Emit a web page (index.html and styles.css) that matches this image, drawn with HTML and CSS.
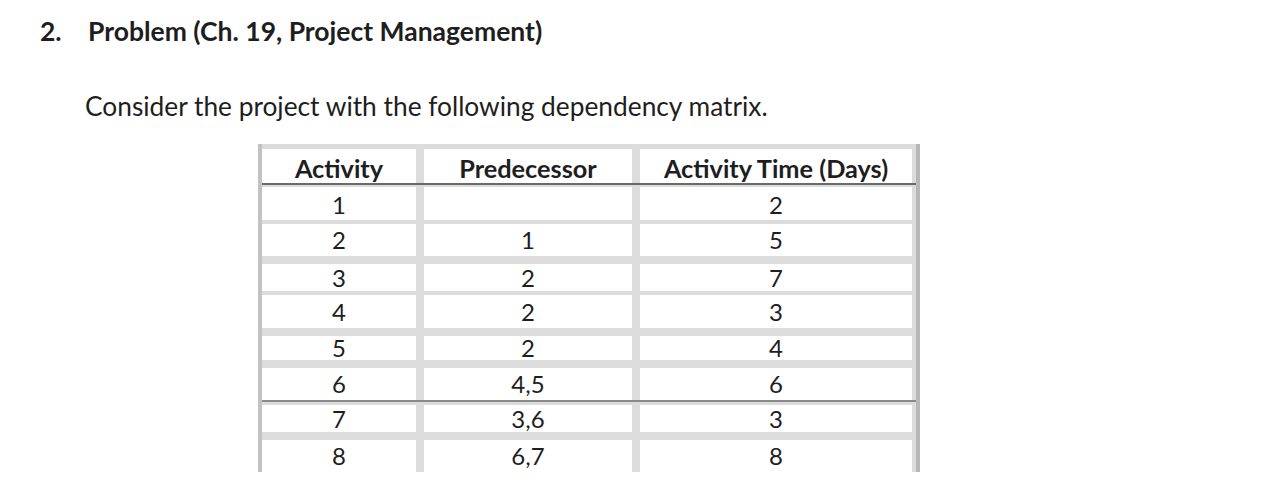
FILE: index.html
```html
<!DOCTYPE html>
<html>
<head>
<meta charset="utf-8">
<link rel="stylesheet" href="styles.css">
</head>
<body>
<div class="page">
  <h2 class="title"><span class="num">2.</span><span class="title-text">Problem (Ch. 19, Project Management)</span></h2>
  <p class="intro">Consider the project with the following dependency matrix.</p>
  <div class="table">
    <div class="row head"><div class="cell">Activity</div><div class="cell">Predecessor</div><div class="cell">Activity Time (Days)</div></div>
    <div class="row"><div class="cell">1</div><div class="cell"></div><div class="cell">2</div></div>
    <div class="row"><div class="cell">2</div><div class="cell">1</div><div class="cell">5</div></div>
    <div class="row"><div class="cell">3</div><div class="cell">2</div><div class="cell">7</div></div>
    <div class="row"><div class="cell">4</div><div class="cell">2</div><div class="cell">3</div></div>
    <div class="row"><div class="cell">5</div><div class="cell">2</div><div class="cell">4</div></div>
    <div class="row"><div class="cell">6</div><div class="cell">4,5</div><div class="cell">6</div></div>
    <div class="row"><div class="cell">7</div><div class="cell">3,6</div><div class="cell">3</div></div>
    <div class="row"><div class="cell">8</div><div class="cell">6,7</div><div class="cell">8</div></div>
  </div>
</div>
</body>
</html>
```
FILE: styles.css
```css
html, body {
  margin: 0;
  padding: 0;
  background: #ffffff;
}
body {
  font-family: Lato, "Noto Sans", sans-serif;
  color: #1e1e1e;
  overflow: hidden;
  height: 501px;
}
.page {
  padding: 15px 0 0 40px;
}
.title {
  display: flex;
  margin: 0;
  font-size: 26.5px;
  font-weight: 700;
  line-height: 32px;
}
.num {
  width: 48px;
}
.intro {
  margin: 45px 0 0 45px;
  font-size: 26.3px;
  line-height: 28px;
}
.table {
  margin: 24px 0 0 218px;
  width: 654px;
  height: 323px;
  background: #dcdcdc;
  border-left: 4px solid #c2c2c2;
  border-right: 4px solid #b8b8b8;
  padding-top: 5px;
  overflow: hidden;
  font-size: 24px;
}
.row {
  display: grid;
  grid-template-columns: 154px 208px 272px;
  grid-template-rows: 100%;
  column-gap: 8px;
  padding-right: 4px;
}
.cell {
  background: #ffffff;
  display: flex;
  align-items: center;
  justify-content: center;
  line-height: 24px;
  min-height: 0;
  height: 100%;
  box-sizing: border-box;
}
.head {
  height: 34px;
  border-bottom: 2px solid #6a6a6a;
  font-weight: 700;
  font-size: 25.3px;
  box-sizing: content-box;
}
.head .cell {
  padding-top: 4px;
}
.row:nth-child(2) { height: 33px; margin-top: 2px; }
.row:nth-child(2) .cell { padding-top: 3px; }
.row:nth-child(3) { height: 32px; margin-top: 4px; }
.row:nth-child(4) { height: 27px; margin-top: 8px; }
.row:nth-child(5) { height: 33px; margin-top: 4px; }
.row:nth-child(6) { height: 24px; margin-top: 8px; }
.row:nth-child(7) { height: 32px; margin-top: 8px; }
.row:nth-child(8) {
  height: 27px;
  border-top: 2px solid #8a8a8a;
  padding-top: 3px;
  box-sizing: content-box;
}
.row:nth-child(9) { height: 32px; margin-top: 8px; }
```
